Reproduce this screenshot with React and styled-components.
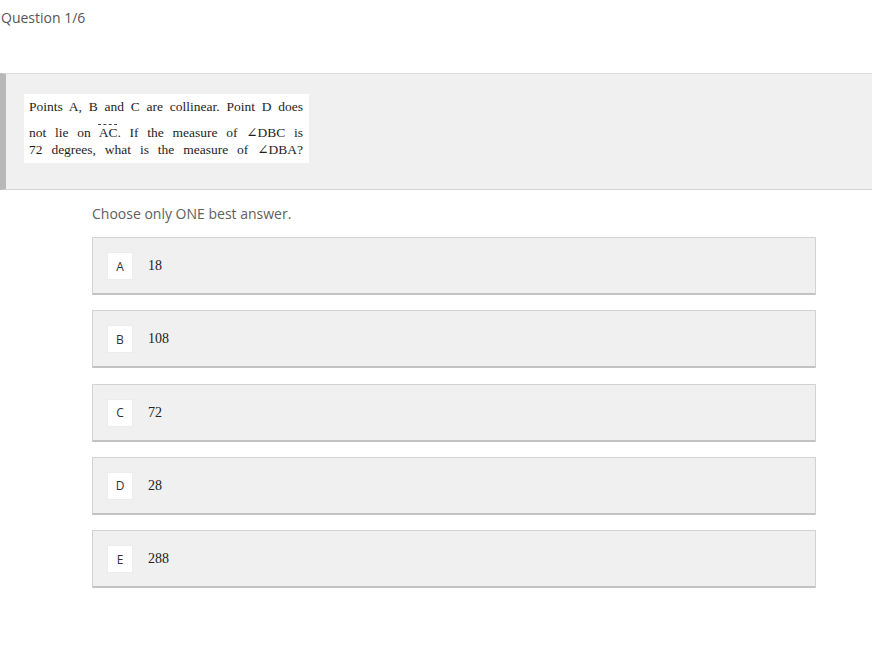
import React from "react";
import styled, { createGlobalStyle } from "styled-components";

const options = [
  { letter: "A", value: "18" },
  { letter: "B", value: "108" },
  { letter: "C", value: "72" },
  { letter: "D", value: "28" },
  { letter: "E", value: "288" },
];

const App = () => {
  return (
    <Page>
      <GlobalStyle />
      <Counter>Question 1/6</Counter>
      <QuestionPanel>
        <QuestionImage>
          <ImageLine>Points A, B and C are collinear. Point D does</ImageLine>
          <ImageLine spaced>
            not lie on <Segment>AC</Segment>. If the measure of ∠DBC is
          </ImageLine>
          <ImageLine>72 degrees, what is the measure of ∠DBA?</ImageLine>
        </QuestionImage>
      </QuestionPanel>
      <Answers>
        <Hint>Choose only ONE best answer.</Hint>
        <OptionList>
          {options.map((o) => (
            <OptionCard key={o.letter}>
              <LetterBox>{o.letter}</LetterBox>
              <OptionValue>{o.value}</OptionValue>
            </OptionCard>
          ))}
        </OptionList>
      </Answers>
    </Page>
  );
};

const GlobalStyle = createGlobalStyle`
  body {
    margin: 0;
    background: #fff;
    font-family: "Open Sans", "Liberation Sans", sans-serif;
  }
`;

const Page = styled.div`
  width: 872px;
  min-height: 671px;
  background: #fff;
`;

const Counter = styled.div`
  padding: 8px 0 0 1px;
  height: 57px;
  box-sizing: border-box;
  font-size: 14px;
  line-height: 20px;
  color: #555;
`;

const QuestionPanel = styled.div`
  margin-top: 16px;
  height: 117px;
  box-sizing: border-box;
  background: #f0f0f0;
  border-top: 1px solid #dcdcdc;
  border-bottom: 1px solid #d4d4d4;
  border-left: 6px solid #b8b8b8;
  padding: 20px 0 0 18px;
`;

const QuestionImage = styled.div`
  width: 285px;
  height: 69px;
  box-sizing: border-box;
  background: #fff;
  padding: 4px 6px 0 5px;
  font-family: "Liberation Serif", "DejaVu Serif", serif;
  font-size: 13.5px;
  color: #1e1e1e;
`;

const ImageLine = styled.div`
  text-align: justify;
  text-align-last: justify;
  line-height: 17px;
  margin-top: ${(props) => (props.spaced ? "9px" : "0")};
  white-space: nowrap;
`;

const Segment = styled.span`
  text-decoration: overline dashed #444;
  text-decoration-thickness: 1px;
`;

const Answers = styled.div`
  padding: 0 56px 0 92px;
`;

const Hint = styled.div`
  padding-top: 14px;
  height: 47px;
  box-sizing: border-box;
  font-size: 14px;
  line-height: 19px;
  color: #606060;
`;

const OptionList = styled.div`
  display: flex;
  flex-direction: column;
  gap: 15.3px;
`;

const OptionCard = styled.div`
  height: 58px;
  box-sizing: border-box;
  display: flex;
  align-items: center;
  padding-left: 14px;
  background: #f0f0f0;
  border: 1px solid #d2d2d2;
  border-bottom: 2px solid #c2c2c2;
  border-radius: 1px;
`;

const LetterBox = styled.div`
  width: 26px;
  height: 28px;
  background: #fff;
  border: 1px solid #ececec;
  box-sizing: border-box;
  display: flex;
  align-items: center;
  justify-content: center;
  font-size: 12px;
  color: #333;
  margin-top: 1px;
`;

const OptionValue = styled.div`
  margin-left: 15px;
  margin-top: 1px;
  font-family: "Liberation Serif", "DejaVu Serif", serif;
  font-size: 14px;
  color: #222;
`;

export default App;
